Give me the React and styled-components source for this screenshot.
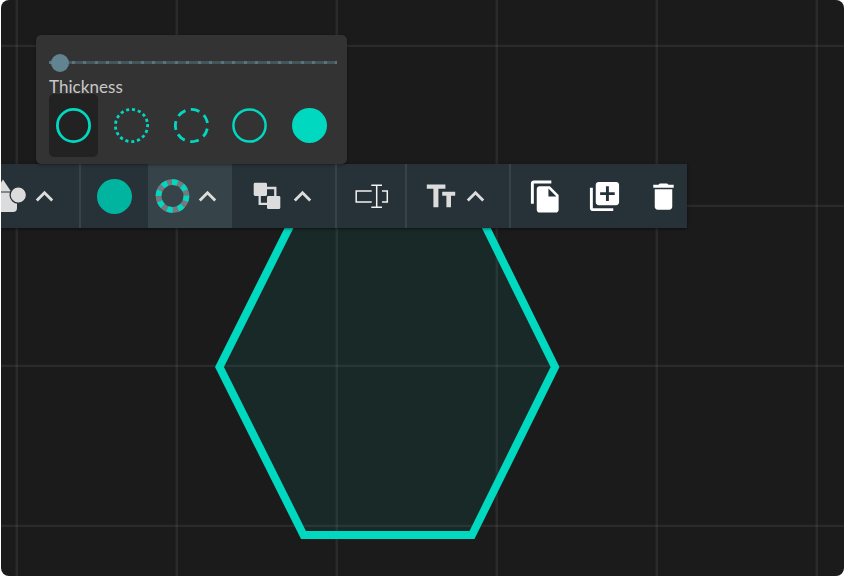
import React from "react";
import styled, { createGlobalStyle } from "styled-components";
import { MdFileCopy, MdLibraryAdd, MdDelete, MdExpandLess } from "react-icons/md";

const teal = "#00d8c0";

const GlobalStyle = createGlobalStyle`
  * { box-sizing: border-box; }
  body { margin: 0; background: #fff; font-family: Lato, sans-serif; overflow: hidden; }
  svg { display: block; flex: none; }
`;

const Frame = styled.div`
  width: 844px;
  height: 576px;
  padding-left: 1px;
`;

const Board = styled.main`
  position: relative;
  height: 576px;
  padding-top: 35px;
  background: #1b1b1b;
  border-radius: 8px;
  overflow: hidden;
`;

const Drawing = styled.svg`
  position: absolute;
  inset: 0;
`;

const Popover = styled.section`
  position: relative;
  z-index: 2;
  width: 311px;
  height: 129px;
  margin-left: 35px;
  padding: 18px 10px 7px 13px;
  background: #333;
  border-radius: 5px;
  box-shadow: 0 1px 3px rgba(0, 0, 0, 0.35);
`;

const Slider = styled.div`
  display: flex;
  align-items: center;
  height: 19px;
  padding-left: 2px;
  background: repeating-linear-gradient(90deg, #587480 0 3px, #465559 3px 11.45px) 0 8px / 288px 3px no-repeat;
`;

const Thumb = styled.span`
  width: 18px;
  height: 18px;
  border-radius: 50%;
  background: #628491;
`;

const Label = styled.div`
  position: relative;
  z-index: 1;
  height: 22px;
  padding-top: 4px;
  font-size: 17px;
  line-height: 22px;
  letter-spacing: 0.05px;
  color: #c8c8c8;
  white-space: nowrap;
`;

const Options = styled.div`
  display: flex;
  gap: 10px;
`;

const Option = styled.button`
  display: grid;
  place-items: center;
  width: 49px;
  height: 63px;
  padding: 0 0 1px;
  border: 0;
  border-radius: 5px;
  background: ${(p) => (p.$selected ? "#222" : "transparent")};

  &:nth-child(even) {
    margin: 0 1px 0 -1px;
  }
`;

const Toolbar = styled.nav`
  position: relative;
  z-index: 1;
  display: flex;
  width: 686px;
  height: 64px;
  background: #263238;
  box-shadow: 0 1px 3px rgba(0, 0, 0, 0.5);
`;

const Group = styled.div`
  display: flex;
  align-items: center;
  flex: none;
  width: ${(p) => p.$width}px;
  padding-left: ${(p) => p.$pad || 0}px;
  gap: ${(p) => p.$gap || 0}px;
  color: ${(p) => p.$color || "#dcdcdc"};
  background: ${(p) => (p.$active ? "#364349" : "transparent")};
  border-right: ${(p) => (p.$divider ? "2px solid #36434b" : "0")};
`;

const Swatch = styled.span`
  width: 35px;
  height: 35px;
  border-radius: 50%;
  background: #00b4a0;
`;

function Canvas() {
  return (
    <Drawing width="843" height="576" viewBox="1 0 843 576">
      <polygon points="303.5,199 472,199 555,367 472,535 303.5,535 219.5,367" fill="#182927" />
      <g stroke="#fff" strokeOpacity=".065">
        {[16.8, 176.8, 336.8, 496.8, 656.8, 816.8].map((x) => (
          <line key={x} x1={x} x2={x} y1="0" y2="576" strokeWidth="2.6" />
        ))}
        {[45.9, 205.9, 365.9, 525.9].map((y) => (
          <line key={y} x1="0" x2="844" y1={y} y2={y} strokeWidth="2.2" />
        ))}
      </g>
      <polygon points="303.5,199 472,199 555,367 472,535 303.5,535 219.5,367" fill="none" stroke={teal} strokeWidth="8" />
    </Drawing>
  );
}

function Ring({ dash, start = 0, width = 2.8, filled }) {
  return (
    <svg width="35" height="35" viewBox="-17.5 -17.5 35 35">
      <circle
        r={filled ? 17.5 : 16.1}
        fill={filled ? teal : "none"}
        stroke={filled ? "none" : teal}
        strokeWidth={width}
        strokeDasharray={dash}
        transform={`rotate(${start})`}
      />
    </svg>
  );
}

function ShapesIcon() {
  return (
    <svg width="26" height="36" viewBox="1 178.5 26 36">
      <path d="M3 180L11 192H-5z" fill="currentColor" />
      <rect x="-8" y="193" width="25" height="19.5" rx="4" fill="currentColor" />
      <circle cx="18.3" cy="195.5" r="8.2" fill="currentColor" stroke="#263238" strokeWidth="1.3" />
    </svg>
  );
}

function StrokeIcon() {
  return (
    <svg width="35" height="36" viewBox="-17.5 -18 35 36" fill="none" strokeWidth="5.8">
      <circle r="13.9" stroke="#737a7d" />
      <circle r="13.9" stroke={teal} strokeDasharray="5.5 5.417" transform="rotate(-92)" />
    </svg>
  );
}

function ArrangeIcon() {
  return (
    <svg width="28" height="28" viewBox="253 182.5 28 28">
      <g fill="currentColor">
        <rect x="253.7" y="183.2" width="13.3" height="13.2" rx="1.4" />
        <rect x="267" y="196.4" width="13.3" height="13.2" rx="1.4" />
      </g>
      <path d="M267 188.5h8.3v8M259.7 196v8.3h8" fill="none" stroke="currentColor" strokeWidth="2.3" />
    </svg>
  );
}

function RenameIcon() {
  return (
    <svg width="34" height="26" viewBox="355 184.5 34 26" fill="none" stroke="#f2f2f2" strokeWidth="1.5">
      <path d="M371.7 192.6H356.2V203.4H371.7M382 192.6H387.3V203.4H382M371.3 186.7H382M371.3 208.7H382M376.7 186.7V208.7" />
    </svg>
  );
}

function TextIcon() {
  return (
    <svg width="30" height="26" viewBox="426 183.5 30 26" fill="currentColor">
      <path d="M426.8 185H445.4V189.2H438.4V207.8H433.4V189.2H426.8zM442.2 192.2H455.2V196.2H451V207.8H446.4V196.2H442.2z" />
    </svg>
  );
}

const Chevron = () => <MdExpandLess size={35} />;

export default function App() {
  return (
    <Frame>
      <GlobalStyle />
      <Board>
        <Canvas />
        <Popover>
          <Slider>
            <Thumb />
          </Slider>
          <Label>Thickness</Label>
          <Options>
            <Option $selected aria-label="Solid"><Ring /></Option>
            <Option aria-label="Dotted"><Ring dash="3.1 2.85" start={-5.3} /></Option>
            <Option aria-label="Dashed"><Ring dash="8.8 5.651" start={164.3} /></Option>
            <Option aria-label="Thin"><Ring width={2.5} /></Option>
            <Option aria-label="Filled"><Ring filled /></Option>
          </Options>
        </Popover>
        <Toolbar>
          <Group $width={80} $divider>
            <ShapesIcon />
            <Chevron />
          </Group>
          <Group $width={67} $pad={16}>
            <Swatch />
          </Group>
          <Group $width={84} $pad={7} $active>
            <StrokeIcon />
            <Chevron />
          </Group>
          <Group $width={105} $pad={21} $gap={3.5} $divider>
            <ArrangeIcon />
            <Chevron />
          </Group>
          <Group $width={70} $pad={18} $divider>
            <RenameIcon />
          </Group>
          <Group $width={104} $pad={19} $gap={1.5} $divider>
            <TextIcon />
            <Chevron />
          </Group>
          <Group $width={176} $pad={17} $gap={24} $color="#fff">
            <MdFileCopy size={35} />
            <MdLibraryAdd size={35} />
            <MdDelete size={35} />
          </Group>
        </Toolbar>
      </Board>
    </Frame>
  );
}
